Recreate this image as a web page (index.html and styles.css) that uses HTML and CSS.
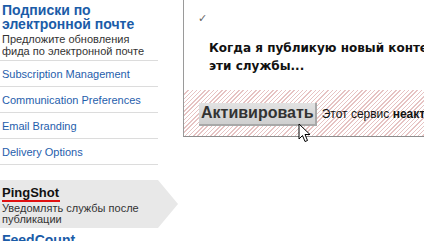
FILE: index.html
```html
<!DOCTYPE html>
<html>
<head>
<meta charset="utf-8">
<link rel="stylesheet" href="styles.css">
</head>
<body>
<div class="page">
  <aside class="sidebar">
    <div class="intro">
      <h2 class="intro-title">Подписки по электронной почте</h2>
      <p class="intro-desc">Предложите обновления фида по электронной почте</p>
    </div>
    <ul class="links">
      <li><a>Subscription Management</a></li>
      <li><a>Communication Preferences</a></li>
      <li><a>Email Branding</a></li>
      <li><a>Delivery Options</a></li>
    </ul>
    <div class="active-item">
      <div class="active-title">PingShot</div>
      <div class="active-desc">Уведомлять службы после публикации</div>
    </div>
    <div class="next-item">FeedCount</div>
  </aside>
  <main class="panel">
    <div class="panel-top">
      <div class="check">✓</div>
      <h3 class="question">Когда я публикую новый контент, уведомлять<br>эти службы...</h3>
    </div>
    <div class="hatch">
      <button class="activate">Активировать</button>
      <span class="status">Этот сервис <b>неактивен</b></span>
    </div>
  </main>
  <svg class="cursor" width="14" height="21" viewBox="0 0 14 21">
    <path d="M1 1 L1 16 L4.5 12.5 L7 18.5 L9.5 17.5 L7 11.5 L12 11.5 Z" fill="#fff" stroke="#000" stroke-width="1" stroke-linejoin="miter"/>
  </svg>
</div>
</body>
</html>
```
FILE: styles.css
```css
* { box-sizing: border-box; }
html, body { margin: 0; padding: 0; background: #fff; }
body { font-family: "Liberation Sans", Arial, sans-serif; overflow: hidden; width: 424px; height: 241px; }
.page { position: relative; display: flex; align-items: flex-start; }
.sidebar { width: 158px; flex: none; }
.intro { padding: 3px 0 3px 2px; }
.intro-title { margin: 0; font-size: 14px; line-height: 14px; font-weight: bold; color: #1b5ca8; }
.intro-desc { margin: 2px 0 0; font-size: 11px; line-height: 12px; color: #333; }
.links { list-style: none; margin: 0; padding: 0; border-top: 1px solid #dcdcdc; }
.links li { height: 26px; border-bottom: 1px solid #dcdcdc; display: flex; align-items: center; padding-left: 2px; padding-top: 1px; }
.links a { font-size: 11px; color: #1f5eac; }
.active-item { position: relative; margin-top: 15px; height: 48px; width: 158px; background: #e8e8e8; padding: 3px 0 0 2px; }
.active-item::after { content: ""; position: absolute; left: 158px; top: 0; border-top: 24px solid transparent; border-bottom: 24px solid transparent; border-left: 20px solid #e8e8e8; }
.active-title { display: inline-block; font-size: 13px; font-weight: bold; color: #111; line-height: 14px; border-bottom: 2px solid #e01010; padding-right: 1px; }
.active-desc { font-size: 11px; line-height: 11px; color: #333; margin-top: 1px; width: 150px; }
.next-item { margin-top: 4px; padding-left: 2px; font-size: 14px; font-weight: bold; color: #1b5ca8; }
.panel { margin-left: 25px; flex: none; width: 400px; border-left: 1px solid #9a9a9a; border-bottom: 1px solid #8c8c8c; }
.panel-top { padding: 12px 0 15px 25px; }
.check { font-size: 11px; color: #666; line-height: 12px; margin-left: -11px; }
.question { margin: 15px 0 0; font-family: "DejaVu Sans", Verdana, sans-serif; font-size: 12px; line-height: 18px; font-weight: bold; color: #111; white-space: nowrap; }
.hatch { height: 46px; display: flex; align-items: center; padding-left: 15px; padding-top: 2px;
  background: repeating-linear-gradient(-45deg, #fff 0, #fff 2px, #e6c3c3 2px, #e6c3c3 3px); }
.activate { font-family: "Liberation Sans", Arial, sans-serif; font-size: 16px; font-weight: bold; color: #333; height: 23px; padding: 0 1px 0 2px; background: linear-gradient(#e2e2e2, #cfcfcf); border: none; border-right: 2px solid #a8a8a8; border-bottom: 2px solid #a8a8a8; margin: 0; }
.status { margin-left: 5px; font-size: 12px; color: #111; white-space: nowrap; }
.cursor { position: absolute; left: 298px; top: 123px; }
```
